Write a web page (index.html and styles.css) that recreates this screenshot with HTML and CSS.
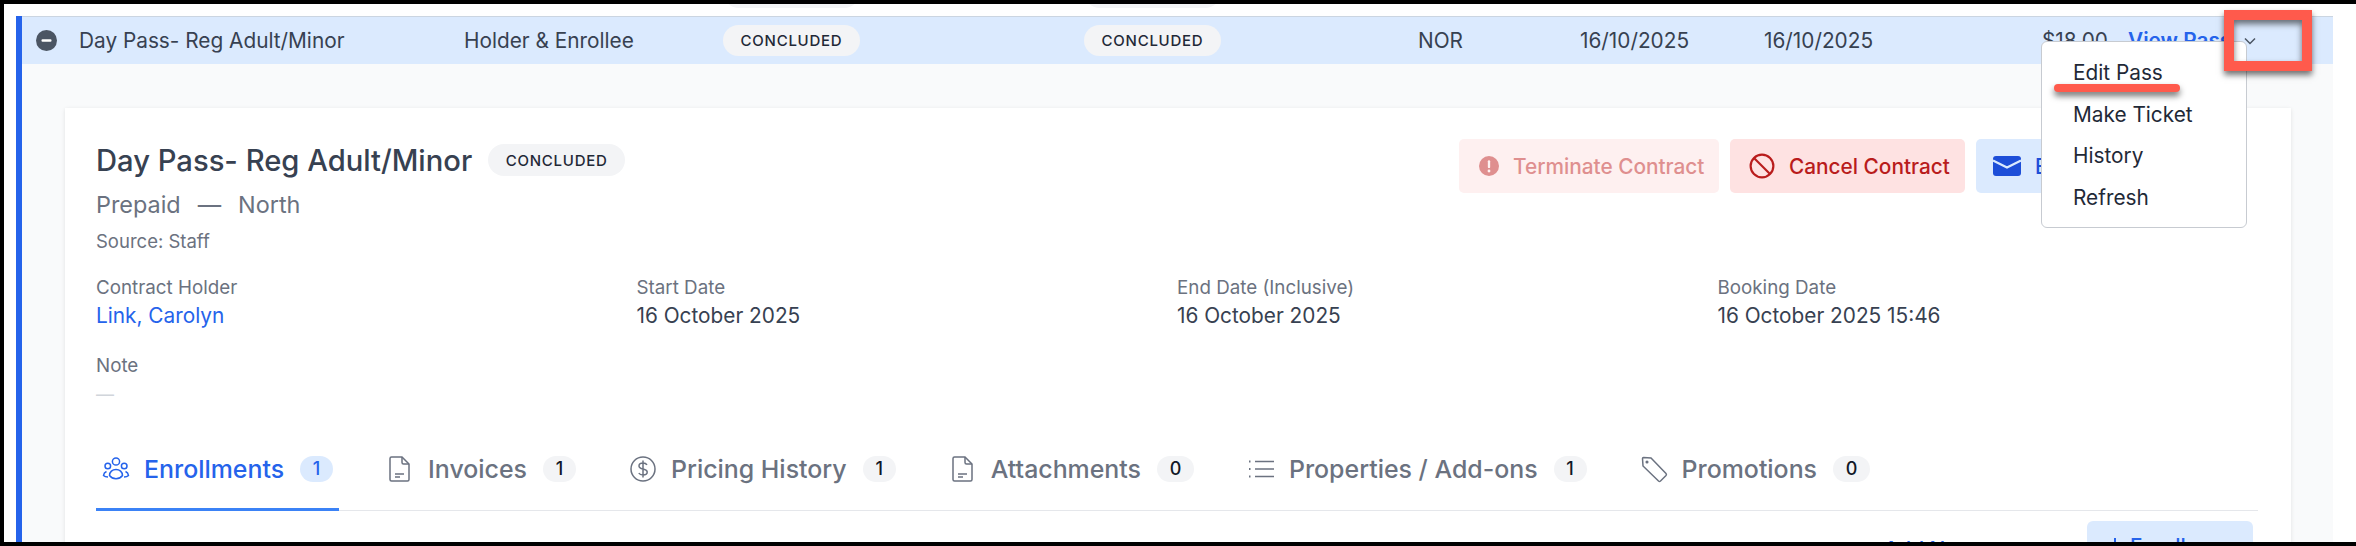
FILE: index.html
```html
<!DOCTYPE html>
<html>
<head>
  <meta charset="utf-8">
  <link rel="stylesheet" href="styles.css">
</head>
<body>
  <div class="frame">
    <div class="list">
      <div class="row-grid prev-row">
        <span></span><span></span><span></span>
        <span class="badge">CONCLUDED</span>
        <span class="badge">CONCLUDED</span>
      </div>
      <div class="expanded">
        <div class="row-grid pass-row">
          <svg class="minus-icon" viewBox="0 0 21 21"><circle cx="10.5" cy="10.5" r="10.5" fill="#4b5563"/><rect x="5.5" y="9.2" width="10" height="2.6" rx="1" fill="#fff"/></svg>
          <span>Day Pass- Reg Adult/Minor</span>
          <span>Holder &amp; Enrollee</span>
          <span><span class="badge">CONCLUDED</span></span>
          <span><span class="badge">CONCLUDED</span></span>
          <span>NOR</span>
          <span>16/10/2025</span>
          <span>16/10/2025</span>
          <span>$18.00</span>
          <a class="view-link">View Pass</a>
          <svg class="chevron" viewBox="0 0 14 14"><path d="M2 4.5l5 5 5-5" fill="none" stroke="#4b5563" stroke-width="1.5"/></svg>
        </div>

        <div class="detail">
          <div class="card">
            <div class="card-head">
              <div class="head-left">
                <div class="title-line">
                  <h2 class="title">Day Pass- Reg Adult/Minor</h2>
                  <span class="badge">CONCLUDED</span>
                </div>
                <div class="subtitle"><span>Prepaid</span><span>—</span><span>North</span></div>
                <div class="source">Source: Staff</div>
              </div>
              <div class="actions">
                <button class="btn btn-terminate">
                  <svg viewBox="0 0 24 24"><circle cx="12" cy="12" r="12" fill="currentColor"/><rect x="10.6" y="5" width="2.8" height="9.5" rx="1.4" fill="#fff1f1"/><circle cx="12" cy="18" r="1.7" fill="#fff1f1"/></svg>
                  Terminate Contract
                </button>
                <button class="btn btn-cancel">
                  <svg viewBox="0 0 24 24" fill="none" stroke="currentColor" stroke-width="2"><circle cx="12" cy="12" r="10.5"/><path d="M4.6 4.6l14.8 14.8"/></svg>
                  Cancel Contract
                </button>
                <button class="btn btn-email">
                  <svg viewBox="0 0 28 20"><rect x="0" y="0" width="28" height="20" rx="3" fill="currentColor"/><path d="M0 4.5l14 7 14-7" fill="none" stroke="#dbeafe" stroke-width="2.2"/></svg>
                  Email Contract
                </button>
              </div>
            </div>

            <div class="facts">
              <div class="fact">
                <div class="fact-label">Contract Holder</div>
                <a class="fact-value fact-link">Link, Carolyn</a>
              </div>
              <div class="fact">
                <div class="fact-label">Start Date</div>
                <div class="fact-value">16 October 2025</div>
              </div>
              <div class="fact">
                <div class="fact-label">End Date (Inclusive)</div>
                <div class="fact-value">16 October 2025</div>
              </div>
              <div class="fact">
                <div class="fact-label">Booking Date</div>
                <div class="fact-value">16 October 2025 15:46</div>
              </div>
              <div class="fact">
                <div class="fact-label">Note</div>
                <div class="fact-value fact-empty">—</div>
              </div>
            </div>

            <div class="tabs">
              <div class="tab tab-active">
                <svg viewBox="0 0 28 28" fill="none" stroke="currentColor" stroke-width="1.5"><circle cx="14" cy="6.5" r="3.6"/><circle cx="5.8" cy="11" r="2.8"/><circle cx="22.2" cy="11" r="2.8"/><path d="M7.5 20.5c0-3.6 2.9-6 6.5-6s6.5 2.4 6.5 6c-1.500 2-3.800 3.200-6.500 3.200s-5-1.200-6.500-3.200z"/><path d="M4.500 16.500c-1.800.8-2.800 2.200-3 4 1 1 2.500 1.500 4.500 1.600M23.500 16.500c1.800.8 2.800 2.200 3 4-1 1-2.500 1.500-4.500 1.600"/></svg>
                <span>Enrollments</span><span class="count">1</span>
              </div>
              <div class="tab">
                <svg viewBox="0 0 28 28" fill="none" stroke="currentColor" stroke-width="1.5"><path d="M5.5 2h10.500l7 7v15.500a1.500 1.500 0 0 1-1.500 1.500h-16a1.500 1.500 0 0 1-1.500-1.500v-21a1.500 1.500 0 0 1 1.500-1.500z"/><path d="M16 2v5.500a1.500 1.500 0 0 0 1.500 1.500h5.500M9 19h9M9 22h5"/></svg>
                <span>Invoices</span><span class="count">1</span>
              </div>
              <div class="tab">
                <svg viewBox="0 0 28 28" fill="none" stroke="currentColor" stroke-width="1.5"><circle cx="14" cy="14" r="12"/><path d="M18 9.800c-.8-1.300-2.200-1.900-4-1.900-2.300 0-4 1.200-4 3 0 4.200 8.200 2 8.200 6.200 0 1.800-1.800 3-4.200 3-1.900 0-3.400-.7-4.200-2.100M14 5.500v17"/></svg>
                <span>Pricing History</span><span class="count">1</span>
              </div>
              <div class="tab">
                <svg viewBox="0 0 28 28" fill="none" stroke="currentColor" stroke-width="1.5"><path d="M5.5 2h10.500l7 7v15.500a1.500 1.500 0 0 1-1.500 1.500h-16a1.500 1.500 0 0 1-1.500-1.500v-21a1.500 1.500 0 0 1 1.500-1.500z"/><path d="M16 2v5.500a1.500 1.500 0 0 0 1.500 1.500h5.500M9 19h9M9 22h5"/></svg>
                <span>Attachments</span><span class="count count-wide">0</span>
              </div>
              <div class="tab">
                <svg viewBox="0 0 28 28" fill="none" stroke="currentColor" stroke-width="1.5"><path d="M8 6.500h19M8 14h19M8 21.500h19"/><path d="M2 6.500h1.500M2 14h1.500M2 21.500h1.500" stroke-width="2"/></svg>
                <span>Properties / Add-ons</span><span class="count">1</span>
              </div>
              <div class="tab">
                <svg viewBox="0 0 28 28" fill="none" stroke="currentColor" stroke-width="1.5"><path d="M2.500 3.500a1 1 0 0 1 1-1l7.500.5 15 15.500a1.500 1.500 0 0 1 0 2l-5.500 5.500a1.500 1.500 0 0 1-2 0l-15.500-15z"/><circle cx="7" cy="7" r=".8"/></svg>
                <span>Promotions</span><span class="count count-wide">0</span>
              </div>
            </div>

            <div class="toolbar">
              <a class="toolbar-link">Add Note</a>
              <button class="btn-add">
                <svg viewBox="0 0 16 16" fill="none" stroke="currentColor" stroke-width="2"><path d="M8 0v16M0 8h16"/></svg>
                Enroll
              </button>
            </div>
          </div>
        </div>
      </div>
    </div>

    <div class="menu">
      <div class="menu-item">Edit Pass</div>
      <div class="menu-item">Make Ticket</div>
      <div class="menu-item">History</div>
      <div class="menu-item">Refresh</div>
    </div>
    <div class="mark-box"></div>
    <div class="mark-line"></div>
  </div>
</body>
</html>
```

FILE: styles.css
```css
* {
  box-sizing: border-box;
}
html, body {
  margin: 0;
  height: 546px;
  overflow: hidden;
  background: #fff;
}
body {
  font-family: Inter, "Liberation Sans", sans-serif;
  font-size: 20.8px;
  color: #374151;
}
.frame {
  position: relative;
  height: 546px;
  border-top: 4px solid #000;
  border-bottom: 4px solid #000;
  border-left: 4px solid #000;
  overflow: hidden;
}
.list {
  margin: 0 23px 0 12px;
}
.row-grid {
  display: grid;
  grid-template-columns: 43px 385px 259px 361px 334px 162px 184px 278px 86px 100px 44px;
  padding-left: 14px;
}
.prev-row {
  height: 12px;
  margin-left: 6px;
  padding-bottom: 8px;
  align-items: end;
  overflow: hidden;
  grid-template-columns: 43px 385px 259px 361px 334px;
  grid-template-rows: 4px;
}
.expanded {
  border-left: 6px solid #2563eb;
}
.pass-row {
  height: 48px;
  align-items: center;
  background: #dbeafe;
  border-top: 1px solid #cbd5e1;
}
.minus-icon {
  width: 21px;
  height: 21px;
}
.chevron {
  width: 14px;
  height: 14px;
  margin-left: 15px;
}
.view-link {
  color: #2563eb;
  font-weight: 600;
  white-space: nowrap;
}
.badge {
  display: inline-flex;
  align-items: center;
  justify-content: center;
  width: 137px;
  height: 32px;
  border-radius: 16px;
  background: #f3f4f6;
  color: #1f2937;
  font-size: 15px;
  font-weight: 500;
  letter-spacing: 0.05em;
}
.pass-row .badge {
  height: 31px;
  vertical-align: middle;
}
.detail {
  padding: 44px 42px 0 43px;
  background: #f9fafb;
}
.card {
  padding: 31px 33px 0 31px;
  background: #fff;
  box-shadow: 0 1px 4px rgba(0, 0, 0, 0.1);
}
.card-head {
  display: flex;
  justify-content: space-between;
}
.head-left {
  padding-top: 5px;
}
.title-line {
  display: flex;
  align-items: center;
  gap: 16px;
  height: 32px;
}
.title {
  margin: 0;
  font-size: 29.2px;
  font-weight: 500;
  color: #374151;
}
.subtitle {
  display: flex;
  gap: 17px;
  height: 28px;
  margin-top: 15px;
  font-size: 23.4px;
  line-height: 28px;
  color: #6b7280;
}
.source {
  height: 22px;
  margin-top: 11px;
  font-size: 18.5px;
  line-height: 22px;
  color: #6b7280;
}
.actions {
  display: flex;
  gap: 11px;
  margin-right: 52px;
}
.btn {
  display: flex;
  align-items: center;
  gap: 14px;
  height: 54px;
  padding: 0 0 0 20px;
  border: 0;
  border-radius: 5px;
  font-family: inherit;
  font-size: 20.8px;
  font-weight: 500;
  white-space: nowrap;
}
.btn svg {
  flex: none;
}
.btn-terminate {
  width: 260px;
  background: #fef0f0;
  color: #df8f8f;
}
.btn-terminate svg {
  width: 20px;
  height: 20px;
}
.btn-cancel {
  width: 235px;
  padding-left: 19px;
  background: #fee2e2;
  color: #b91c1c;
}
.btn-cancel svg {
  width: 26px;
  height: 26px;
}
.btn-email {
  width: 230px;
  padding-left: 17px;
  background: #dbeafe;
  color: #1d4ed8;
}
.btn-email svg {
  width: 28px;
  height: 20px;
}
.facts {
  display: grid;
  grid-template-columns: repeat(4, 1fr);
  row-gap: 27px;
  margin-top: 25px;
}
.fact-label {
  height: 22px;
  font-size: 18.8px;
  line-height: 22px;
  color: #6b7280;
}
.fact-value {
  display: block;
  height: 24px;
  margin-top: 5px;
  line-height: 24px;
}
.fact-link {
  color: #2563eb;
}
.fact-empty {
  margin-top: 6px;
  font-size: 18px;
  color: #d1d5db;
}
.tabs {
  display: flex;
  gap: 41px;
  margin-top: 49px;
  border-bottom: 1px solid #e5e7eb;
}
.tab {
  display: flex;
  align-items: center;
  height: 55px;
  margin-bottom: -1px;
  padding: 0 6px 27px;
  border-bottom: 3px solid transparent;
  font-size: 24.9px;
  font-weight: 500;
  color: #6b7280;
}
.tab svg {
  width: 28px;
  height: 28px;
  margin-right: 14px;
}
.tab-active {
  border-bottom-color: #3b82f6;
  color: #2563eb;
}
.count {
  display: flex;
  align-items: center;
  justify-content: center;
  width: 33px;
  height: 26px;
  margin-left: 16px;
  border-radius: 13px;
  background: #f3f4f6;
  color: #111827;
  font-size: 18px;
}
.count-wide {
  width: 37px;
}
.tab-active .count {
  background: #dbeafe;
  color: #2563eb;
}
.toolbar {
  display: flex;
  justify-content: flex-end;
  gap: 110px;
  margin-top: 10px;
  padding-right: 5px;
}
.toolbar-link {
  margin-top: 17px;
  line-height: 24px;
  color: #2563eb;
  font-weight: 500;
}
.btn-add {
  display: flex;
  align-items: flex-start;
  gap: 7px;
  width: 166px;
  height: 48px;
  padding: 14px 0 0 20px;
  border: 0;
  border-radius: 6px;
  background: #dbeafe;
  color: #2563eb;
  font-family: inherit;
  font-size: 20.8px;
  font-weight: 500;
  line-height: 24px;
}
.btn-add svg {
  width: 16px;
  height: 16px;
  margin-top: 3px;
}
.menu {
  position: absolute;
  top: 37px;
  left: 2037px;
  width: 206px;
  height: 187px;
  padding-top: 10px;
  background: #fff;
  border: 1px solid #c7cbd1;
  border-radius: 6px;
}
.menu-item {
  height: 41.5px;
  padding-left: 31px;
  line-height: 41.5px;
  color: #1f2937;
}
.mark-box {
  position: absolute;
  top: 6px;
  left: 2220px;
  width: 88px;
  height: 61px;
  border: 10px solid #ff5a4c;
  box-shadow: 0 4px 6px rgba(0, 0, 0, 0.55), inset 0 4px 6px rgba(0, 0, 0, 0.55);
}
.mark-line {
  position: absolute;
  top: 80px;
  left: 2050px;
  width: 126px;
  height: 8px;
  border-radius: 4px;
  background: #ff5a4c;
  box-shadow: 0 4px 6px rgba(0, 0, 0, 0.55);
}
```
